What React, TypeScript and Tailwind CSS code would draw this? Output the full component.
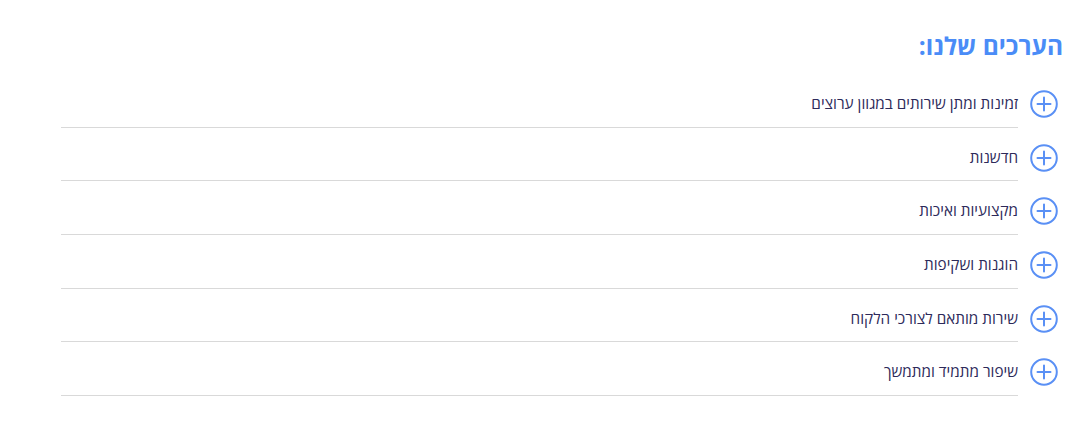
import React from "react";

const items = [
  "זמינות ומתן שירותים במגוון ערוצים",
  "חדשנות",
  "מקצועיות ואיכות",
  "הוגנות ושקיפות",
  "שירות מותאם לצורכי הלקוח",
  "שיפור מתמיד ומתמשך",
];

function PlusCircle() {
  return (
    <svg width="28" height="28" viewBox="0 0 28 28" fill="none" className="shrink-0">
      <circle cx="14" cy="14" r="12.8" stroke="#5a90f5" strokeWidth="2" />
      <path d="M14 7.5V20.5M7.5 14H20.5" stroke="#5a90f5" strokeWidth="2" strokeLinecap="round" />
    </svg>
  );
}

export default function App() {
  return (
    <div
      dir="rtl"
      className="w-[1082px] h-[432px] bg-white pl-[61px] pr-[19px] pt-[30px]"
      style={{ fontFamily: '"Open Sans", "Liberation Sans", "DejaVu Sans", sans-serif' }}
    >
      <h2 className="text-[24.5px] leading-[32px] font-bold text-[#4a8cf7]">הערכים שלנו:</h2>
      <div className="mt-[12px] mr-[5px] flex flex-col">
        {items.map((t) => (
          <div key={t} className="flex items-start gap-[12px]">
            <div className="pt-[16px]">
              <PlusCircle />
            </div>
            <div className="flex-1 h-[53.7px] border-b border-[#d9d9d9] flex items-center pt-[6px]">
              <span className="text-[15.3px] text-[#2d2a5a]">{t}</span>
            </div>
          </div>
        ))}
      </div>
    </div>
  );
}
